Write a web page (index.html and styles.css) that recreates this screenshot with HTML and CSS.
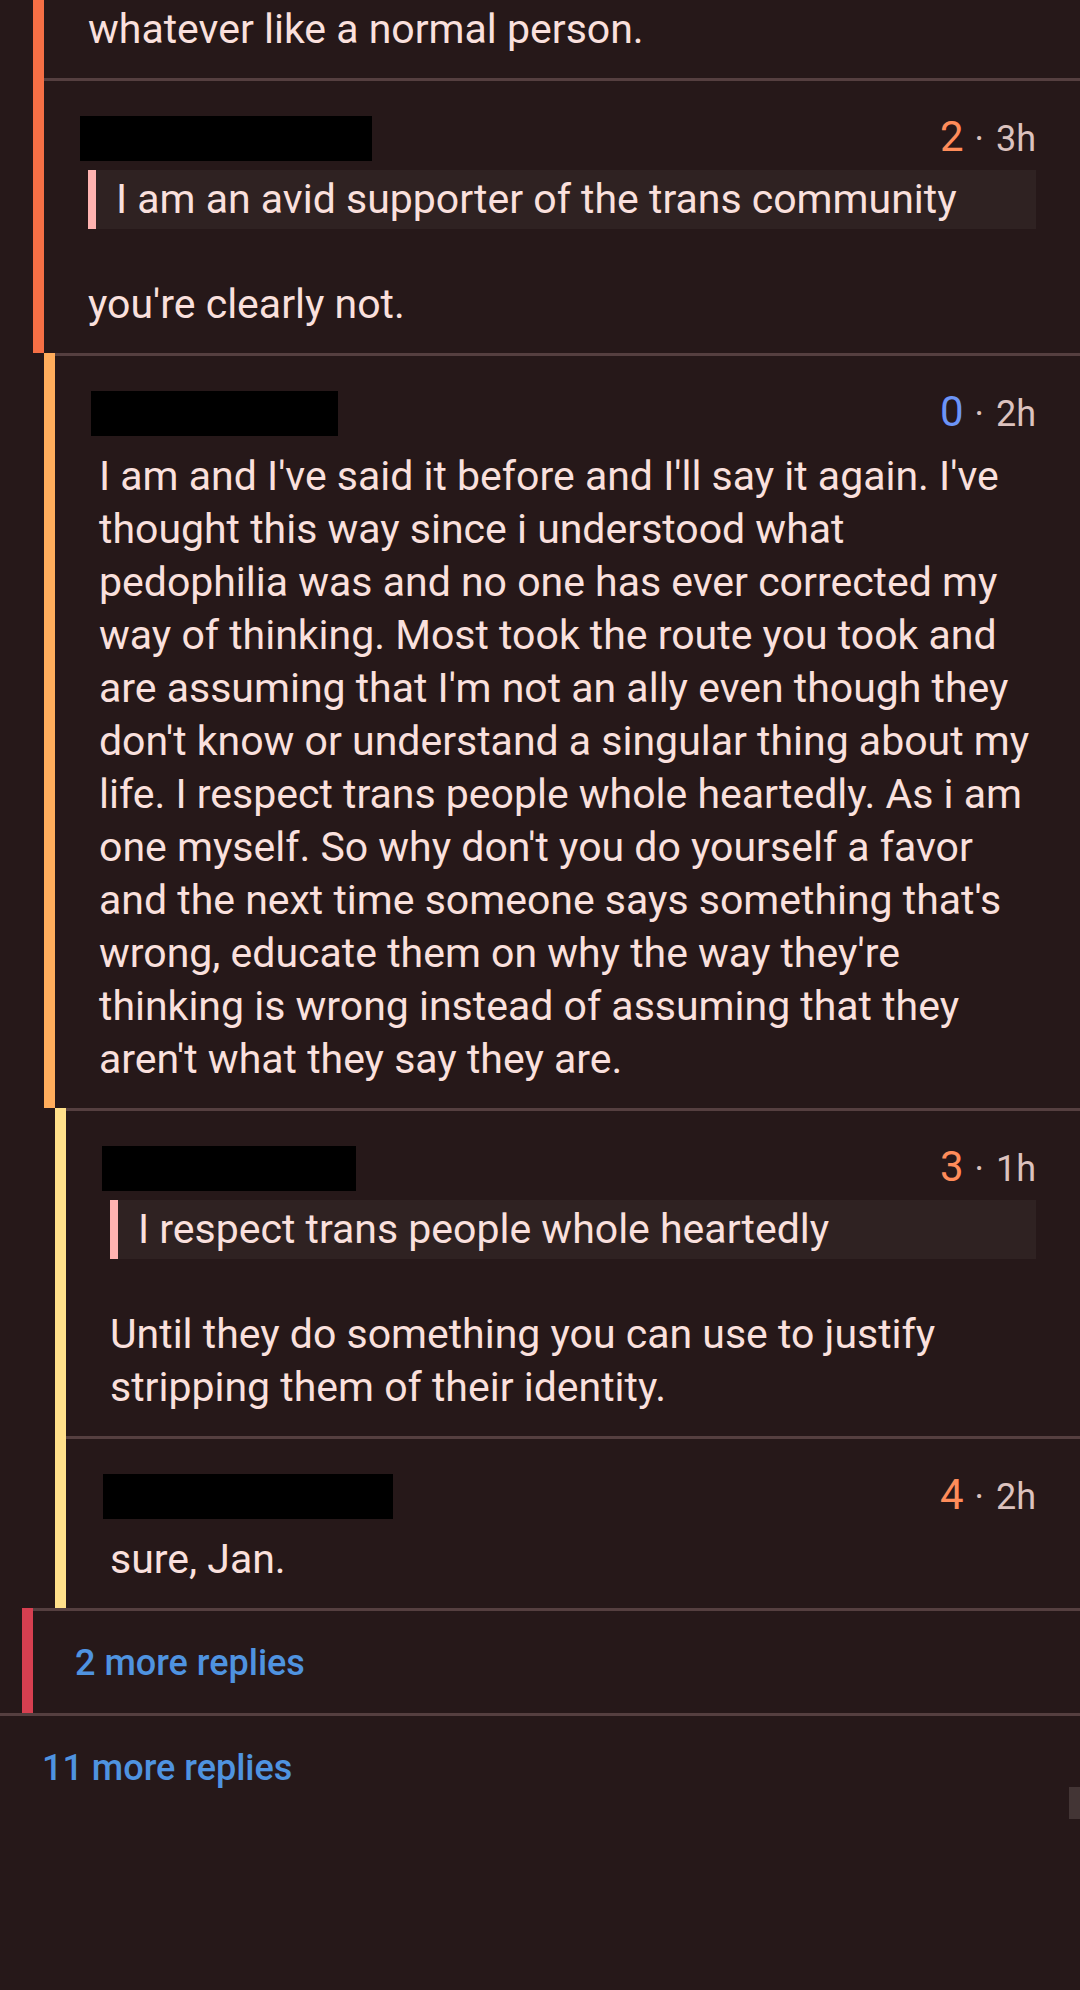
FILE: index.html
```html
<!DOCTYPE html>
<html lang="en">
<head>
    <meta charset="UTF-8">
    <meta name="viewport" content="width=device-width, initial-scale=1.0">
    <title>Comments</title>
    <link rel="stylesheet" href="styles.css">
</head>
<body>
    <div class="thread">
        <!-- tail of the comment above, scrolled off -->
        <div class="comment d2 clipped">
            <div class="bar"></div>
            <div class="inner">
                <p>whatever like a normal person.</p>
            </div>
        </div>

        <div class="comment d2">
            <div class="bar"></div>
            <div class="inner">
                <div class="head">
                    <span class="redacted r1"></span>
                    <span class="meta"><span class="score">2</span><span class="sep">·</span>3h</span>
                </div>
                <div class="body">
                    <blockquote><p>I am an avid supporter of the trans community</p></blockquote>
                    <p>you're clearly not.</p>
                </div>
            </div>
        </div>

        <div class="comment d3">
            <div class="bar"></div>
            <div class="inner">
                <div class="head">
                    <span class="redacted r2"></span>
                    <span class="meta"><span class="score zero">0</span><span class="sep">·</span>2h</span>
                </div>
                <div class="body">
                    <p>I am and I've said it before and I'll say it again. I've thought this way since i understood what pedophilia was and no one has ever corrected my way of thinking. Most took the route you took and are assuming that I'm not an ally even though they don't know or understand a singular thing about my life. I respect trans people whole heartedly. As i am one myself. So why don't you do yourself a favor and the next time someone says something that's wrong, educate them on why the way they're thinking is wrong instead of assuming that they aren't what they say they are.</p>
                </div>
            </div>
        </div>

        <div class="comment d4">
            <div class="bar"></div>
            <div class="inner">
                <div class="head">
                    <span class="redacted r3"></span>
                    <span class="meta"><span class="score">3</span><span class="sep">·</span>1h</span>
                </div>
                <div class="body">
                    <blockquote><p>I respect trans people whole heartedly</p></blockquote>
                    <p>Until they do something you can use to justify stripping them of their identity.</p>
                </div>
            </div>
        </div>

        <div class="comment d4">
            <div class="bar"></div>
            <div class="inner">
                <div class="head">
                    <span class="redacted r4"></span>
                    <span class="meta"><span class="score">4</span><span class="sep">·</span>2h</span>
                </div>
                <div class="body">
                    <p>sure, Jan.</p>
                </div>
            </div>
        </div>

        <div class="comment d1 more">
            <div class="bar"></div>
            <div class="inner">2 more replies</div>
        </div>

        <div class="comment d0 more">
            <div class="inner">11 more replies</div>
        </div>
    </div>

    <div class="scroll-thumb"></div>
</body>
</html>
```

FILE: styles.css
```css
body {
    margin: 0;
    background: #261819;
    color: #fae0dd;
    font-family: Roboto, "Noto Sans", sans-serif;
}

p {
    margin: 0;
    font-size: 41px;
    line-height: 53px;
}

.comment {
    display: flex;
}

.comment.d1 { margin-left: 22px; }
.comment.d2 { margin-left: 33px; }
.comment.d3 { margin-left: 44px; }
.comment.d4 { margin-left: 55px; }

.bar {
    width: 11px;
    flex-shrink: 0;
}

.d1 .bar { background: #d63f50; }
.d2 .bar { background: #f56f45; }
.d3 .bar { background: #ffad5c; }
.d4 .bar { background: #ffe08a; }

.inner {
    flex: 1;
    min-width: 0;
    border-top: 3px solid #553f40;
    padding: 0 44px 22px;
}

.clipped .inner {
    border-top: none;
    padding-top: 3px;
}

.head {
    display: flex;
    justify-content: space-between;
    align-items: flex-start;
    padding-top: 35px;
}

.redacted {
    display: block;
    height: 45px;
    margin-left: -8px;
    background: #000;
}

.r1 { width: 292px; }
.r2 { width: 247px; }
.r3 { width: 254px; }
.r4 { width: 290px; margin-left: -7px; }

.meta {
    font-size: 36px;
    line-height: 41px;
    color: #dcc2be;
    white-space: nowrap;
}

.score {
    font-size: 42px;
    color: #ff8c5a;
}

.score.zero {
    color: #6c94f7;
}

.sep {
    margin: 0 12px 0 11px;
}

.body {
    padding-top: 14px;
}

blockquote {
    margin: -5px 0 49px;
    padding: 3px 20px;
    border-left: 8px solid #ffb3b1;
    background: #2f2222;
}

.more .inner {
    padding: 3px 42px 0;
    font-size: 36px;
    font-weight: 500;
    line-height: 99px;
    color: #4f93e0;
}

.scroll-thumb {
    position: fixed;
    right: 0;
    top: 1787px;
    width: 11px;
    height: 32px;
    background: #433535;
}
```
